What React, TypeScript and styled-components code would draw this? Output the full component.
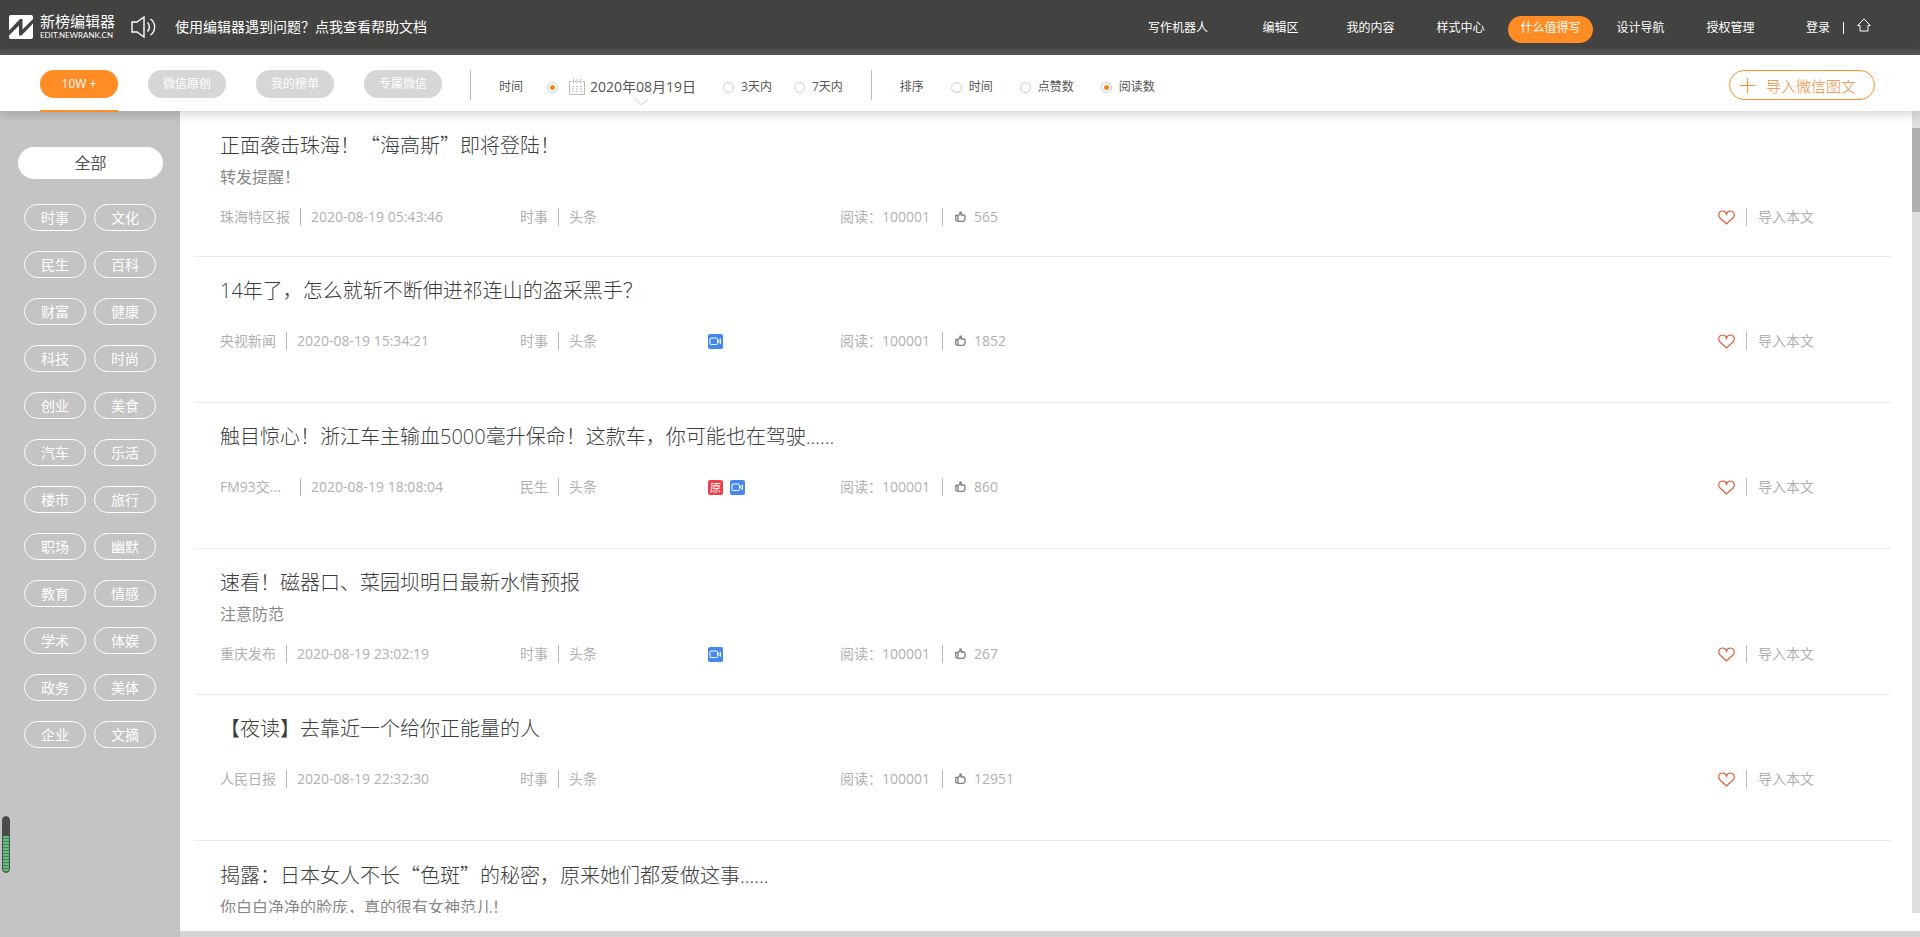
import React from 'react';
import styled, { createGlobalStyle, css } from 'styled-components';

const GlobalStyle = createGlobalStyle`
  *, *::before, *::after { box-sizing: border-box; }
  body {
    margin: 0;
    background: #fff;
    color: #555;
    font-family: 'Open Sans', 'Noto Sans CJK SC', sans-serif;
    font-size: 14px;
  }
  button {
    margin: 0;
    padding: 0;
    border: 0;
    background: none;
    color: inherit;
    font: inherit;
    cursor: pointer;
  }
  a { color: inherit; text-decoration: none; }
  h2, p, ul { margin: 0; padding: 0; font-weight: 400; }
  ul { list-style: none; }
`;

const orange = '#ff8c24';

const Page = styled.div`
  display: flex;
  flex-direction: column;
  height: 100vh;
  overflow: hidden;
  position: relative;
`;

/* ---------- header ---------- */

const Header = styled.header`
  flex: none;
  display: flex;
  align-items: center;
  height: 55px;
  padding: 0 49px 0 9px;
  background: linear-gradient(#424240 0, #424240 46px, #5c5c5c 55px);
  color: #fff;
`;

const Brand = styled.a`
  display: flex;
  align-items: center;
  gap: 7px;
  height: 48px;
  padding-bottom: 2px;
`;

const BrandText = styled.span`
  display: flex;
  flex-direction: column;
`;

const BrandName = styled.span`
  font-size: 15px;
  line-height: 17px;
`;

const BrandUrl = styled.span`
  font-family: Lato, 'Open Sans', sans-serif;
  font-size: 8px;
  line-height: 10px;
`;

const HelpLink = styled.a`
  display: flex;
  align-items: center;
  gap: 19px;
  margin-left: 16px;
  padding-bottom: 2px;
  font-size: 14px;
  line-height: 20px;
`;

const Nav = styled.nav`
  display: flex;
  align-items: center;
  gap: 5px;
  margin-left: auto;
  padding-top: 4px;
  font-size: 12px;
`;

const NavItem = styled.a<{ $active?: boolean; $wide?: boolean }>`
  width: ${p => (p.$wide ? 110 : 85)}px;
  height: 27px;
  border-radius: 14px;
  line-height: 24px;
  text-align: center;
  background: ${p => (p.$active ? orange : 'transparent')};
`;

const Account = styled.div`
  display: flex;
  align-items: center;
  gap: 13px;
  margin-left: 33px;
  font-size: 12px;
  line-height: 20px;
`;

const Rule = styled.span<{ $h: number; $color?: string }>`
  flex: none;
  width: 1px;
  height: ${p => p.$h}px;
  background: ${p => p.$color ?? '#bbb'};
`;

/* ---------- toolbar ---------- */

const Toolbar = styled.div`
  flex: none;
  display: flex;
  align-items: flex-start;
  height: 56px;
  padding: 15px 45px 0 40px;
  background: #fff;
  box-shadow: 0 2px 12px rgba(0, 0, 0, 0.2);
  position: relative;
  z-index: 1;
`;

const Tabs = styled.div`
  display: flex;
  gap: 30px;
  margin-right: 28px;
`;

const Tab = styled.button<{ $active?: boolean }>`
  display: block;
  width: 78px;
  height: 42px;
  padding-bottom: 12px;
  border-bottom: 2px solid ${p => (p.$active ? orange : 'transparent')};
  color: #fff;
  font-size: 12px;
`;

const TabPill = styled.span<{ $active?: boolean }>`
  display: block;
  height: 28px;
  border-radius: 14px;
  line-height: 28px;
  background: ${p => (p.$active ? orange : '#d6d6d6')};
`;

const Filters = styled.fieldset`
  display: flex;
  align-items: center;
  height: 34px;
  margin: 0 28px;
  padding: 0;
  border: 0;
  font-size: 12px;
  line-height: 20px;
`;

const FilterName = styled.span`
  margin-right: 24px;
`;

const SortName = styled(FilterName)`
  margin-right: 27px;
`;

const FilterOption = styled.div`
  display: flex;
  align-items: center;
  gap: 7px;

  & + & { margin-left: 22px; }
`;

const SortOption = styled(FilterOption)`
  & + & { margin-left: 27px; }
`;

const Radio = styled.input`
  appearance: none;
  flex: none;
  width: 11px;
  height: 11px;
  margin: 0;
  border: 1px solid #ccc;
  border-radius: 50%;

  &:checked {
    background: radial-gradient(circle, #f08a1c 0, #f08a1c 2px, #fff 3px);
  }
`;

const DateButton = styled.button`
  display: flex;
  align-items: center;
  gap: 5px;
  margin: 0 5px 0 4px;
  font-size: 14px;
  position: relative;

  .chevron {
    position: absolute;
    left: 66px;
    top: 22px;
  }
`;

const ImportButton = styled.button`
  display: flex;
  align-items: center;
  gap: 11px;
  height: 30px;
  margin-left: auto;
  padding: 0 18px 0 10px;
  border: 1px solid ${orange};
  border-radius: 15px;
  color: #f08a3c;
  font-size: 15px;
  font-weight: 300;
`;

/* ---------- body ---------- */

const Body = styled.div`
  flex: 1;
  display: flex;
  min-height: 0;
`;

const Sidebar = styled.aside`
  flex: none;
  width: 180px;
  padding: 36px 17px 0 18px;
  background: #c4c4c4;
`;

const AllButton = styled.button`
  display: block;
  width: 100%;
  height: 32px;
  border-radius: 16px;
  background: #fff;
  font-size: 16px;
  line-height: 30px;
`;

const Categories = styled.div`
  display: grid;
  grid-template-columns: 62px 62px;
  gap: 20px 8px;
  margin: 25px 0 0 6px;
`;

const Category = styled.button`
  height: 27px;
  border: 1px solid #fff;
  border-radius: 14px;
  color: #fff;
  font-size: 14px;
  line-height: 23px;
`;

const Main = styled.main`
  flex: 1;
  display: flex;
  flex-direction: column;
  min-width: 0;
  border-bottom: 6px solid #d6d4d5;
`;

const Scroller = styled.div`
  flex: 1;
  display: flex;
  justify-content: space-between;
  min-height: 0;
  margin-bottom: 18px;
  overflow: hidden;
`;

const List = styled.ul`
  flex: 1;
  margin: 0 21px 0 15px;
`;

const Track = styled.div`
  flex: none;
  width: 8px;
  padding-top: 17px;
  background: #dfdfdf;
`;

const Thumb = styled.div`
  height: 84px;
  background: #b0b0b0;
`;

const Article = styled.li`
  display: flex;
  flex-direction: column;
  min-height: 146px;
  padding: 20px 77px 0 25px;
  border-bottom: 1px solid #ebebeb;
`;

const Title = styled.h2`
  margin-bottom: 7px;
  color: #3c3c3c;
  font-size: 20px;
  line-height: 28px;
  font-weight: 300;
`;

const Quote = styled.span`
  font-family: 'Noto Sans CJK SC', sans-serif;
`;

const Summary = styled.p`
  color: #888;
  font-size: 16px;
  line-height: 21px;
`;

const Meta = styled.div`
  display: grid;
  grid-template-columns: 300px 188px 132px 1fr auto;
  align-items: center;
  margin-top: 20px;
  color: #b0b0b0;
  font-size: 14px;
  line-height: 18px;
`;

const Group = styled.div<{ $gap: number }>`
  display: flex;
  align-items: center;
  gap: ${p => p.$gap}px;
  height: 18px;
  white-space: nowrap;
`;

const Source = styled.span<{ $cut?: boolean }>`
  ${p => p.$cut && css`width: 70px;`}
`;

const Tag = styled.span<{ $color: string }>`
  display: flex;
  align-items: center;
  justify-content: center;
  width: 15px;
  height: 15px;
  border-radius: 2px;
  background: ${p => p.$color};
  color: #fff;
  font-size: 11px;
  line-height: 15px;
`;

const Likes = styled.span`
  display: flex;
  align-items: center;
  gap: 8px;
`;

const HeartButton = styled.button`
  display: flex;
`;

const Gauge = styled.div`
  position: absolute;
  left: 2px;
  bottom: 64px;
  width: 8px;
  height: 57px;
  border: 1px solid #4a4a4a;
  border-radius: 4px;
  background:
    linear-gradient(#4a4a4a 0, #4a4a4a 19px, transparent 19px),
    repeating-linear-gradient(#4a8058 0, #4a8058 1px, #5fc07a 1px, #5fc07a 3px);
`;

/* ---------- drawings ---------- */

const LogoMark = () => (
  <svg width="24" height="24" viewBox="0 0 24 24" aria-hidden="true">
    <rect width="24" height="24" rx="2" fill="#fff" />
    <path d="M0 15.500L11 4H13.500V14.500L24 4V8.500L12.500 20.500H10V10.500L0 20.500Z" fill="#424240" />
  </svg>
);

const Speaker = () => (
  <svg width="25" height="22" viewBox="0 0 25 22" fill="none" stroke="#fff" strokeWidth="1.4" aria-hidden="true">
    <path d="M1 6H6L13 1V21L6 16H1Z" />
    <path d="M16.500 6.500C19 9 19 13 16.500 15.500" />
    <path d="M19.500 3C25 7 25 15 19.500 19" />
  </svg>
);

const Home = () => (
  <svg width="14" height="14" viewBox="0 0 14 14" fill="none" stroke="#fff" aria-hidden="true">
    <path d="M0.700 7.500L7 0.800L13.300 7.500H11V13H3V7.500Z" />
  </svg>
);

const CalendarIcon = () => (
  <svg width="16" height="16" viewBox="0 0 16 16" fill="none" stroke="#bbb" aria-hidden="true">
    <path d="M2.500 2.500H0.500V15.500H15.500V2.500H13.500M5.500 2.500H7M9 2.500H10.500" />
    <path d="M4.500 0V4M8 0V4M11.500 0V4" />
    <path d="M3 7.500H13M3 10H13M3 12.500H13" strokeDasharray="2 2" />
  </svg>
);

const Chevron = () => (
  <svg className="chevron" width="13" height="7" viewBox="0 0 13 7" fill="none" stroke="#ccc" aria-hidden="true">
    <path d="M0.500 0.500L6.500 6L12.500 0.500" />
  </svg>
);

const Plus = () => (
  <svg width="15" height="15" viewBox="0 0 15 15" stroke={orange} aria-hidden="true">
    <path d="M0 7.500H15M7.500 0V15" />
  </svg>
);

const Video = () => (
  <svg width="13" height="9" viewBox="0 0 13 9" fill="none" stroke="#fff" aria-hidden="true">
    <rect x="1" y="1" width="7.500" height="6.500" rx="1" />
    <path d="M9 4.200L11.500 2V6.500Z" />
  </svg>
);

const ThumbUp = () => (
  <svg width="11" height="12" viewBox="0 0 11 12" fill="none" stroke="#808080" strokeWidth="1.300" aria-hidden="true">
    <path d="M3 4.500H0.800V9.500L2 10.200H3Z" />
    <path d="M3 4.500L4.800 3.200L5 1.200H6.200V4H9L10 5.200V8.500L8.500 10.300H3" />
  </svg>
);

const Heart = () => (
  <svg width="17" height="15" viewBox="0 0 17 15" fill="none" stroke="#e0603c" strokeWidth="1.200" aria-hidden="true">
    <path d="M8.500 14L2 8C-0.500 5 1 1 4.500 1C6.500 1 8 2.300 8.500 4C9 2.300 10.500 1 12.500 1C16 1 17.500 5 15 8Z" />
  </svg>
);

/* ---------- data ---------- */

type Item = {
  title: string;
  summary?: string;
  source?: string;
  cut?: boolean;
  time?: string;
  category?: string;
  original?: boolean;
  video?: boolean;
  likes?: number;
};

const items: Item[] = [
  { title: '正面袭击珠海！“海高斯”即将登陆！', summary: '转发提醒！', source: '珠海特区报', time: '2020-08-19 05:43:46', category: '时事', likes: 565 },
  { title: '14年了，怎么就斩不断伸进祁连山的盗采黑手？', source: '央视新闻', time: '2020-08-19 15:34:21', category: '时事', video: true, likes: 1852 },
  { title: '触目惊心！浙江车主输血5000毫升保命！这款车，你可能也在驾驶......', source: 'FM93交...', cut: true, time: '2020-08-19 18:08:04', category: '民生', original: true, video: true, likes: 860 },
  { title: '速看！磁器口、菜园坝明日最新水情预报', summary: '注意防范', source: '重庆发布', time: '2020-08-19 23:02:19', category: '时事', video: true, likes: 267 },
  { title: '【夜读】去靠近一个给你正能量的人', source: '人民日报', time: '2020-08-19 22:32:30', category: '时事', likes: 12951 },
  { title: '揭露：日本女人不长“色斑”的秘密，原来她们都爱做这事......', summary: '你白白净净的脸庞，真的很有女神范儿！' },
];

const categories = [
  '时事', '文化', '民生', '百科', '财富', '健康', '科技', '时尚',
  '创业', '美食', '汽车', '乐活', '楼市', '旅行', '职场', '幽默',
  '教育', '情感', '学术', '体娱', '政务', '美体', '企业', '文摘',
];

const navItems = ['写作机器人', '编辑区', '我的内容', '样式中心', '什么值得写', '设计导航', '授权管理'];
const tabs = ['10W +', '微信原创', '我的榜单', '专属微信'];

/* Curly quotes take the full-width Chinese form. */
const withQuotes = (text: string) =>
  text.split(/([“”])/).map((part, i) => (/[“”]/.test(part) ? <Quote key={i}>{part}</Quote> : part));

const ArticleRow = ({ item }: { item: Item }) => (
  <Article>
    <Title>{withQuotes(item.title)}</Title>
    {item.summary && <Summary>{item.summary}</Summary>}
    {item.source && (
      <Meta>
        <Group $gap={10}>
          <Source $cut={item.cut}>{item.source}</Source>
          <Rule $h={18} />
          <span>{item.time}</span>
        </Group>
        <Group $gap={10}>
          <span>{item.category}</span>
          <Rule $h={18} />
          <span>头条</span>
        </Group>
        <Group $gap={7}>
          {item.original && <Tag $color="#f0404a">原</Tag>}
          {item.video && <Tag $color="#4488ee"><Video /></Tag>}
        </Group>
        <Group $gap={12}>
          <span>阅读：100001</span>
          <Rule $h={18} />
          <Likes><ThumbUp />{item.likes}</Likes>
        </Group>
        <Group $gap={11}>
          <HeartButton aria-label="收藏"><Heart /></HeartButton>
          <Rule $h={18} />
          <button>导入本文</button>
        </Group>
      </Meta>
    )}
  </Article>
);

export default function App() {
  return (
    <Page>
      <GlobalStyle />
      <Header>
        <Brand href="#">
          <LogoMark />
          <BrandText>
            <BrandName>新榜编辑器</BrandName>
            <BrandUrl>EDIT.NEWRANK.CN</BrandUrl>
          </BrandText>
        </Brand>
        <HelpLink href="#">
          <Speaker />
          使用编辑器遇到问题？点我查看帮助文档
        </HelpLink>
        <Nav>
          {navItems.map((name, i) => (
            <NavItem key={name} href="#" $wide={i === 0} $active={name === '什么值得写'}>{name}</NavItem>
          ))}
        </Nav>
        <Account>
          <a href="#">登录</a>
          <Rule $h={12} $color="#fff" />
          <a href="#" aria-label="首页"><Home /></a>
        </Account>
      </Header>

      <Toolbar>
        <Tabs>
          {tabs.map((name, i) => (
            <Tab key={name} $active={i === 0}><TabPill $active={i === 0}>{name}</TabPill></Tab>
          ))}
        </Tabs>
        <Rule $h={30} />
        <Filters aria-label="时间">
          <FilterName>时间</FilterName>
          <FilterOption>
            <Radio type="radio" name="time" aria-label="指定日期" defaultChecked />
            <DateButton><CalendarIcon />2020年08月19日<Chevron /></DateButton>
          </FilterOption>
          <FilterOption>
            <Radio type="radio" name="time" id="time-3" />
            <label htmlFor="time-3">3天内</label>
          </FilterOption>
          <FilterOption>
            <Radio type="radio" name="time" id="time-7" />
            <label htmlFor="time-7">7天内</label>
          </FilterOption>
        </Filters>
        <Rule $h={30} />
        <Filters aria-label="排序">
          <SortName>排序</SortName>
          <SortOption>
            <Radio type="radio" name="sort" id="sort-time" />
            <label htmlFor="sort-time">时间</label>
          </SortOption>
          <SortOption>
            <Radio type="radio" name="sort" id="sort-likes" />
            <label htmlFor="sort-likes">点赞数</label>
          </SortOption>
          <SortOption>
            <Radio type="radio" name="sort" id="sort-reads" defaultChecked />
            <label htmlFor="sort-reads">阅读数</label>
          </SortOption>
        </Filters>
        <ImportButton><Plus />导入微信图文</ImportButton>
      </Toolbar>

      <Body>
        <Sidebar>
          <AllButton>全部</AllButton>
          <Categories>
            {categories.map(name => <Category key={name}>{name}</Category>)}
          </Categories>
        </Sidebar>
        <Main>
          <Scroller>
            <List>
              {items.map(item => <ArticleRow key={item.title} item={item} />)}
            </List>
            <Track><Thumb /></Track>
          </Scroller>
        </Main>
      </Body>
      <Gauge />
    </Page>
  );
}
